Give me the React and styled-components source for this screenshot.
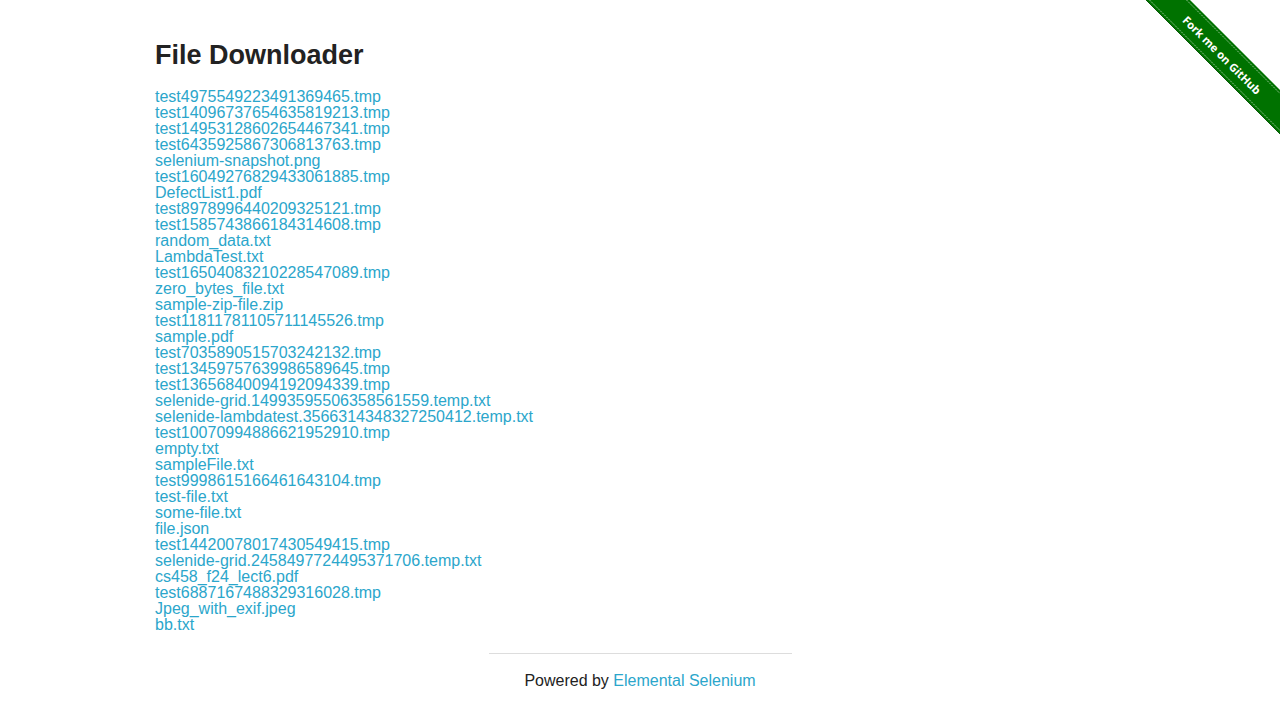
import React from "react";
import styled, { createGlobalStyle } from "styled-components";

const GlobalStyle = createGlobalStyle`
  html, body {
    margin: 0;
    padding: 0;
    background: #fff;
  }
  body {
    font-family: "Liberation Sans", Arial, Helvetica, sans-serif;
    font-size: 16px;
    color: #222;
  }
`;

const Page = styled.div`
  position: relative;
  width: 100%;
  padding-top: 38px;
`;

const Row = styled.div`
  max-width: 1000px;
  margin: 0 auto;
`;

const Content = styled.div`
  padding: 0 15px;
`;

const Title = styled.h3`
  margin: 0 0 17px;
  font-size: 27px;
  line-height: 34px;
  font-weight: bold;
  color: #222;
`;

const FileList = styled.div`
  display: flex;
  flex-direction: column;
  align-items: flex-start;
`;

const FileLink = styled.a`
  display: block;
  font-size: 16px;
  line-height: 16px;
  color: #2ba6cb;
  text-decoration: none;
`;

const Footer = styled.div`
  width: 303px;
  margin: 20px auto 0;
  border-top: 1px solid #ddd;
  padding-top: 15px;
  text-align: center;
  font-size: 16px;
  line-height: 24px;
  color: #222;
`;

const FooterLink = styled.a`
  color: #2ba6cb;
  text-decoration: none;
`;

const RibbonLink = styled.a`
  position: absolute;
  top: 0;
  right: 0;
  width: 149px;
  height: 149px;
  display: block;
`;

const files = [
  "test4975549223491369465.tmp",
  "test14096737654635819213.tmp",
  "test14953128602654467341.tmp",
  "test6435925867306813763.tmp",
  "selenium-snapshot.png",
  "test16049276829433061885.tmp",
  "DefectList1.pdf",
  "test8978996440209325121.tmp",
  "test1585743866184314608.tmp",
  "random_data.txt",
  "LambdaTest.txt",
  "test16504083210228547089.tmp",
  "zero_bytes_file.txt",
  "sample-zip-file.zip",
  "test11811781105711145526.tmp",
  "sample.pdf",
  "test7035890515703242132.tmp",
  "test13459757639986589645.tmp",
  "test13656840094192094339.tmp",
  "selenide-grid.14993595506358561559.temp.txt",
  "selenide-lambdatest.3566314348327250412.temp.txt",
  "test10070994886621952910.tmp",
  "empty.txt",
  "sampleFile.txt",
  "test9998615166461643104.tmp",
  "test-file.txt",
  "some-file.txt",
  "file.json",
  "test14420078017430549415.tmp",
  "selenide-grid.2458497724495371706.temp.txt",
  "cs458_f24_lect6.pdf",
  "test6887167488329316028.tmp",
  "Jpeg_with_exif.jpeg",
  "bb.txt",
];

function Ribbon() {
  return (
    <RibbonLink href="#">
      <svg width="149" height="149" viewBox="0 0 149 149">
        <polygon points="15,0 59,0 149,90 149,134" fill="#007200" />
        <line x1="15" y1="0" x2="149" y2="134" stroke="#0a5a0a" strokeWidth="1" />
        <line x1="18.5" y1="0" x2="149" y2="130.5" stroke="rgba(255,255,255,0.55)" strokeWidth="1" strokeDasharray="2 1" />
        <line x1="55.5" y1="0" x2="149" y2="93.5" stroke="rgba(255,255,255,0.55)" strokeWidth="1" strokeDasharray="2 1" />
        <text
          x="91"
          y="55"
          transform="rotate(45 91 55)"
          textAnchor="middle"
          dominantBaseline="central"
          fill="#fff"
          fontFamily="'Open Sans', 'DejaVu Sans', sans-serif"
          fontWeight="bold"
          fontSize="11.2"
        >
          Fork me on GitHub
        </text>
      </svg>
    </RibbonLink>
  );
}

export default function App() {
  return (
    <Page>
      <GlobalStyle />
      <Ribbon />
      <Row>
        <Content>
          <Title>File Downloader</Title>
          <FileList>
            {files.map((f) => (
              <FileLink key={f} href="#">
                {f}
              </FileLink>
            ))}
          </FileList>
        </Content>
      </Row>
      <Footer>
        Powered by <FooterLink href="#">Elemental Selenium</FooterLink>
      </Footer>
    </Page>
  );
}
